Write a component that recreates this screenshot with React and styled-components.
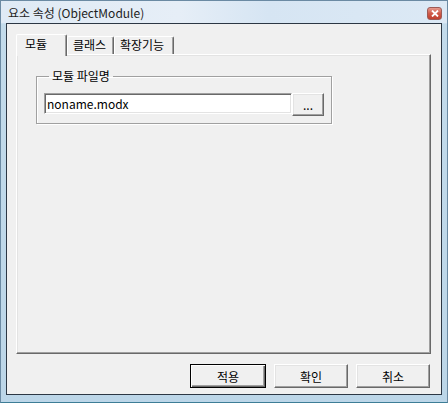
import React from "react";
import styled, { createGlobalStyle } from "styled-components";

const Global = createGlobalStyle`
  html, body { margin: 0; padding: 0; background: #ffffff; }
  body { font-family: "Noto Sans CJK KR", "Noto Sans", sans-serif; }
`;

const FONT = `"Noto Sans CJK KR", "Noto Sans", sans-serif`;

const Window = styled.div`
  box-sizing: border-box;
  width: 448px;
  height: 403px;
  display: flex;
  flex-direction: column;
  border: 1px solid #6b8aa3;
  border-bottom-color: #3d7d96;
  background: linear-gradient(to bottom, #dbe8f4 0px, #d3e3f2 22px, #c3dbeb 23px, #bcd6e8 100%);
`;

const TitleBar = styled.div`
  height: 22px;
  display: flex;
  align-items: center;
  justify-content: space-between;
  padding: 0 5px 0 7px;
  background: linear-gradient(to right, #dfeaf5 0%, #e6eef7 40%, #d6e5f3 60%, #dce9f5 100%);
`;

const Title = styled.span`
  font-family: ${FONT};
  font-size: 12px;
  color: #1e1e1e;
  line-height: 14px;
  margin-top: 2px;
`;

const CloseButton = styled.div`
  width: 15px;
  height: 13px;
  margin-top: 2px;
  border: 1px solid #9c5a55;
  border-radius: 3px;
  background: linear-gradient(to bottom, #e59a8e 0%, #cf5a48 50%, #c0402e 100%);
  display: flex;
  align-items: center;
  justify-content: center;
  box-sizing: border-box;
`;

const Client = styled.div`
  flex: 1;
  margin: 0 5px 7px 5px;
  border: 1px solid #2c3744;
  background: #f0f0f0;
  display: flex;
  flex-direction: column;
  padding: 10px 10px 6px 9px;
  min-height: 0;
`;

const Tabs = styled.div`
  flex: 1;
  display: flex;
  flex-direction: column;
  min-height: 0;
`;

const TabStrip = styled.div`
  display: flex;
  align-items: flex-end;
  height: 22px;
  margin-bottom: -2px;
  position: relative;
  z-index: 1;
`;

const Tab = styled.div`
  box-sizing: border-box;
  width: ${(p) => p.$w}px;
  height: ${(p) => (p.$active ? 22 : 18)}px;
  margin-bottom: ${(p) => (p.$active ? 0 : 2)}px;
  background: #f0f0f0;
  border-left: 1px solid #ffffff;
  border-top: 1px solid #ffffff;
  border-right: 1px solid #696969;
  box-shadow: inset -1px 0 0 #a0a0a0;
  border-radius: 2px 2px 0 0;
  font-family: ${FONT};
  font-size: 12px;
  line-height: 14px;
  color: #000;
  padding: ${(p) => (p.$active ? "2px 0 0 8px" : "1px 0 0 5px")};
  white-space: nowrap;
`;

const Panel = styled.div`
  flex: 1;
  border: 1px solid;
  border-color: #ffffff #696969 #696969 #ffffff;
  box-shadow: inset -1px -1px 0 #a0a0a0, inset 1px 1px 0 #e3e3e3;
  background: #f0f0f0;
  padding: 14px 18px 0 19px;
`;

const GroupBox = styled.fieldset`
  box-sizing: border-box;
  width: 296px;
  margin: 0;
  padding: 10px 7px 7px 7px;
  border: 1px solid #a0a0a0;
  box-shadow: inset 1px 1px 0 #ffffff, 1px 1px 0 #ffffff;
  display: flex;
  min-width: 0;
`;

const Legend = styled.legend`
  font-family: ${FONT};
  font-size: 12px;
  line-height: 14px;
  color: #000;
  padding: 0 3px;
  margin-left: 5px;
`;

const Field = styled.div`
  display: flex;
  align-items: flex-start;
  width: 100%;
`;

const TextBox = styled.div`
  box-sizing: border-box;
  width: 248px;
  height: 21px;
  background: #fff;
  border: 1px solid;
  border-color: #a0a0a0 #ffffff #ffffff #a0a0a0;
  box-shadow: inset 1px 1px 0 #696969, inset -1px -1px 0 #e3e3e3;
  font-family: ${FONT};
  font-size: 12px;
  line-height: 17px;
  padding: 1px 0 0 2px;
  color: #000;
`;

const Button = styled.div`
  box-sizing: border-box;
  width: ${(p) => p.$w}px;
  height: ${(p) => p.$h}px;
  background: #f0f0f0;
  border: 1px solid;
  border-color: ${(p) => (p.$default ? "#000 #000 #000 #000" : "#ffffff #696969 #696969 #ffffff")};
  box-shadow: ${(p) =>
    p.$default
      ? "inset 1px 1px 0 #ffffff, inset -1px -1px 0 #696969, inset -2px -2px 0 #a0a0a0"
      : "inset -1px -1px 0 #a0a0a0, inset 1px 1px 0 #e3e3e3"};
  display: flex;
  align-items: center;
  justify-content: center;
  font-family: ${FONT};
  font-size: 12px;
  color: #000;
`;

const ButtonRow = styled.div`
  display: flex;
  justify-content: flex-end;
  gap: 8px;
  margin: 10px 1px 0 0;
`;

export default function App() {
  return (
    <>
      <Global />
      <Window>
        <TitleBar>
          <Title>요소 속성 (ObjectModule)</Title>
          <CloseButton>
            <svg width="8" height="7" viewBox="0 0 8 7">
              <path d="M1 0.5 L7 6.5 M7 0.5 L1 6.5" stroke="#ffffff" strokeWidth="1.8" />
            </svg>
          </CloseButton>
        </TitleBar>
        <Client>
          <Tabs>
            <TabStrip>
              <Tab $active $w={51}>모듈</Tab>
              <Tab $w={47}>클래스</Tab>
              <Tab $w={60}>확장기능</Tab>
            </TabStrip>
            <Panel>
              <GroupBox>
                <Legend>모듈 파일명</Legend>
                <Field>
                  <TextBox>noname.modx</TextBox>
                  <Button $w={32} $h={23}>...</Button>
                </Field>
              </GroupBox>
            </Panel>
          </Tabs>
          <ButtonRow>
            <Button $default $w={76} $h={24}>적용</Button>
            <Button $w={74} $h={24}>확인</Button>
            <Button $w={74} $h={24}>취소</Button>
          </ButtonRow>
        </Client>
      </Window>
    </>
  );
}
